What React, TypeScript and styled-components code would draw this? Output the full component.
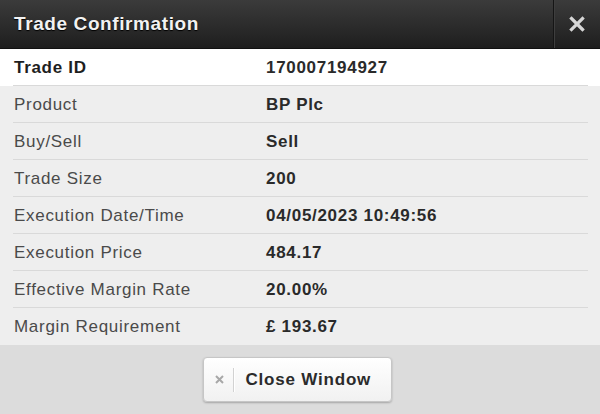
import React from "react";
import styled, { createGlobalStyle } from "styled-components";

const Global = createGlobalStyle`
  html, body { margin: 0; padding: 0; background: #dcdcdc; }
  body { font-family: "Liberation Sans", Arial, Helvetica, sans-serif; }
`;

const Dialog = styled.div`
  width: 600px;
  height: 414px;
  display: flex;
  flex-direction: column;
  background: #eeeeee;
  overflow: hidden;
`;

const Header = styled.div`
  height: 48px;
  display: flex;
  align-items: stretch;
  background: linear-gradient(#3b3b3b, #1e1e1e);
  border-bottom: 1px solid #111;
`;

const Title = styled.h1`
  flex: 1;
  margin: 0;
  padding-left: 14px;
  display: flex;
  align-items: center;
  font-size: 19px;
  letter-spacing: 0.6px;
  font-weight: bold;
  color: #f2f2f2;
  text-shadow: 0 1px 1px #000;
`;

const CloseX = styled.button`
  width: 47px;
  border: none;
  border-left: 1px solid #151515;
  box-shadow: inset 1px 0 0 #3e3e3e;
  background: transparent;
  display: flex;
  align-items: center;
  justify-content: center;
  padding: 0;
  cursor: pointer;
`;

const Rows = styled.div`
  display: flex;
  flex-direction: column;
`;

const Row = styled.div<{ $highlight?: boolean; $last?: boolean }>`
  height: 37px;
  padding: 1px 12px 0 14px;
  box-sizing: border-box;
  display: flex;
  align-items: center;
  background: ${(p) => (p.$highlight ? "#ffffff" : "#eeeeee")};
  position: relative;
  font-size: 17px;
  letter-spacing: 0.7px;
  &::after {
    content: "";
    display: ${(p) => (p.$last ? "none" : "block")};
    position: absolute;
    left: 13px;
    right: 12px;
    bottom: 0;
    height: 1px;
    background: #d9d9d9;
    box-shadow: 0 1px 0 #fbfbfb;
  }
`;

const Label = styled.div<{ $strong?: boolean }>`
  width: 252px;
  color: ${(p) => (p.$strong ? "#1e1e1e" : "#4a4a4a")};
  font-weight: ${(p) => (p.$strong ? "bold" : "normal")};
`;

const Value = styled.div`
  font-weight: bold;
  color: #2a2a2a;
`;

const Footer = styled.div`
  flex: 1;
  background: #dcdcdc;
  display: flex;
  justify-content: center;
  padding: 12px 6px 0 0;
`;

const Button = styled.button`
  height: 45px;
  width: 189px;
  padding: 0 10px 0 11px;
  display: flex;
  align-items: center;
  border: 1px solid #c6c6c6;
  border-radius: 4px;
  background: linear-gradient(#ffffff, #f1f1f1);
  box-shadow: 0 1px 2px rgba(0, 0, 0, 0.25);
  font-family: "Liberation Sans", Arial, sans-serif;
  font-size: 17px;
  letter-spacing: 0.8px;
  font-weight: bold;
  color: #2b2b2b;
  cursor: pointer;
`;

const IconSlot = styled.span`
  display: flex;
  align-items: center;
  height: 24px;
  padding-right: 9px;
  margin-right: 12px;
  border-right: 1px solid #d2d2d2;
  box-shadow: 1px 0 0 #fff;
`;

const rows: [string, string][] = [
  ["Product", "BP Plc"],
  ["Buy/Sell", "Sell"],
  ["Trade Size", "200"],
  ["Execution Date/Time", "04/05/2023 10:49:56"],
  ["Execution Price", "484.17"],
  ["Effective Margin Rate", "20.00%"],
  ["Margin Requirement", "£ 193.67"],
];

export default function App() {
  return (
    <>
      <Global />
      <Dialog>
        <Header>
          <Title>Trade Confirmation</Title>
          <CloseX aria-label="Close">
            <svg width="16" height="16" viewBox="0 0 16 16">
              <path d="M2.5 2.5 L13.5 13.5 M13.5 2.5 L2.5 13.5" stroke="#d6d6d6" strokeWidth="3.2" strokeLinecap="square" />
            </svg>
          </CloseX>
        </Header>
        <Rows>
          <Row $highlight>
            <Label $strong>Trade ID</Label>
            <Value>170007194927</Value>
          </Row>
          {rows.map(([l, v], i) => (
            <Row key={l} $last={i === rows.length - 1}>
              <Label>{l}</Label>
              <Value>{v}</Value>
            </Row>
          ))}
        </Rows>
        <Footer>
          <div>
            <Button>
              <IconSlot>
                <svg width="9" height="9" viewBox="0 0 9 9">
                  <path d="M1 1 L8 8 M8 1 L1 8" stroke="#a8a8a8" strokeWidth="2" />
                </svg>
              </IconSlot>
              Close Window
            </Button>
          </div>
        </Footer>
      </Dialog>
    </>
  );
}
